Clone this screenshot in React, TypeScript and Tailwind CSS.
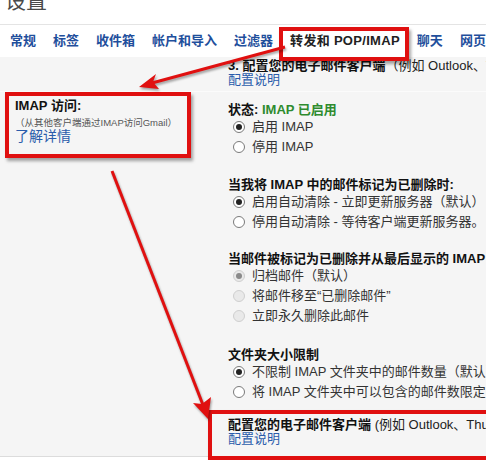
import React from "react";

type Opt = { label: string; checked?: boolean };

const tabs = ["常规", "标签", "收件箱", "帐户和导入", "过滤器"];

function Radio({ checked, disabled }: { checked?: boolean; disabled?: boolean }) {
  return (
    <span
      className={
        disabled
          ? "flex h-[12px] w-[12px] shrink-0 items-center justify-center rounded-full border border-[#cfcfcf] bg-[#e9e9e9]"
          : "flex h-[12px] w-[12px] shrink-0 items-center justify-center rounded-full border border-[#7a7a7a] bg-white"
      }
    >
      {checked ? (
        <span
          className={
            disabled
              ? "h-[6px] w-[6px] rounded-full bg-[#8a8a8a]"
              : "h-[6px] w-[6px] rounded-full bg-[#222]"
          }
        />
      ) : null}
    </span>
  );
}

function Group({
  title,
  options,
  disabled,
  className,
}: {
  title: React.ReactNode;
  options: Opt[];
  disabled?: boolean;
  className?: string;
}) {
  return (
    <div className={className}>
      <div className="h-[15px] font-bold leading-[15px] text-[#111]">{title}</div>
      {options.map((o) => (
        <div key={o.label} className="flex h-[20px] items-center gap-[7px] pl-[5px]">
          <Radio checked={o.checked} disabled={disabled} />
          <span className="leading-[20px] text-[#333]">{o.label}</span>
        </div>
      ))}
    </div>
  );
}

export default function App() {
  return (
    <div className="relative h-[460px] w-[486px] overflow-hidden whitespace-nowrap bg-white text-[13px] text-[#222] [font-family:'Liberation_Sans','Noto_Sans_CJK_SC',sans-serif]">
      {/* page title, cut off at the top */}
      <div className="h-[25px] overflow-hidden border-b border-[#e4e4e4] pl-[5px]">
        <div className="-mt-[14px] text-[21px] leading-[30px] text-[#4a4a4a]">设置</div>
      </div>

      {/* tabs */}
      <nav className="flex h-[32px] items-center gap-[17px] pl-[10px] font-bold text-[#1f4f9c]">
        {tabs.map((t) => (
          <span key={t}>{t}</span>
        ))}
        <span className="tracking-[0.3px] text-[#222]">转发和 POP/IMAP</span>
        <span>聊天</span>
        <span>网页剪辑</span>
      </nav>

      {/* settings panel */}
      <div className="h-[400px] border-b border-[#dcdcdc] bg-[#f5f5f5]">
        <div className="h-[35px] border-b border-[#fbfbfb] pl-[228px] pt-[2px] leading-[14px]">
          <div>
            <span className="font-bold text-[#111]">3. 配置您的电子邮件客户端</span>
            <span>（例如 Outlook、Thunderbird、iPhone）</span>
          </div>
          <div className="text-[#2a5cab]">配置说明</div>
        </div>

        <div className="grid grid-cols-[228px_1fr]">
          <div className="pl-[15px] pt-[6px]">
            <div className="font-bold leading-[16px] text-[#111]">IMAP 访问:</div>
            <div className="mt-[3px] text-[9.5px] leading-[11px] text-[#555]">（从其他客户端通过IMAP访问Gmail）</div>
            <div className="text-[14px] leading-[17px] text-[#2a5cab]">了解详情</div>
          </div>

          <div className="overflow-hidden pt-[10px]">
            <Group
              title={
                <>
                  状态: <span className="text-[#2e8b2e]">IMAP 已启用</span>
                </>
              }
              options={[{ label: "启用 IMAP", checked: true }, { label: "停用 IMAP" }]}
            />
            <Group
              className="mt-[20px]"
              title="当我将 IMAP 中的邮件标记为已删除时:"
              options={[
                { label: "启用自动清除 - 立即更新服务器（默认）", checked: true },
                { label: "停用自动清除 - 等待客户端更新服务器。" },
              ]}
            />
            <Group
              className="mt-[19px]"
              disabled
              title="当邮件被标记为已删除并从最后显示的 IMAP 文件夹中清除时:"
              options={[
                { label: "归档邮件（默认）", checked: true },
                { label: "将邮件移至“已删除邮件”" },
                { label: "立即永久删除此邮件" },
              ]}
            />
            <Group
              className="mt-[21px]"
              title="文件夹大小限制"
              options={[
                { label: "不限制 IMAP 文件夹中的邮件数量（默认）", checked: true },
                { label: "将 IMAP 文件夹中可以包含的邮件数限定为 1,000" },
              ]}
            />
          </div>
        </div>

        <div className="mt-[16px] pl-[228px] leading-[14px]">
          <div>
            <span className="font-bold text-[#111]">配置您的电子邮件客户端</span>
            <span> (例如 Outlook、Thunderbird、iPhone)</span>
          </div>
          <div className="text-[#2a5cab]">配置说明</div>
        </div>
      </div>

      {/* red annotation boxes */}
      <div className="absolute left-[279px] top-[27px] h-[34px] w-[130px] border-[4px] border-[#e01010] shadow-[2px_3px_3px_rgba(0,0,0,0.35)]" />
      <div className="absolute left-[5px] top-[92px] h-[66px] w-[186px] border-[4px] border-[#e01010] shadow-[2px_3px_3px_rgba(0,0,0,0.35)]" />
      <div className="absolute left-[208px] top-[410px] h-[50px] w-[290px] border-[4px] border-[#e01010] shadow-[2px_3px_3px_rgba(0,0,0,0.35)]" />

      {/* red arrows */}
      <svg
        className="pointer-events-none absolute left-0 top-0 drop-shadow-[1px_2px_1px_rgba(0,0,0,0.35)]"
        width="486"
        height="460"
        viewBox="0 0 486 460"
      >
        <line x1="285" y1="47" x2="152" y2="83" stroke="#e01010" strokeWidth="3" />
        <polygon points="139,87 159,89 153,82 156,74" fill="#e01010" />
        <line x1="112" y1="171" x2="203" y2="405" stroke="#e01010" strokeWidth="3" />
        <polygon points="208,419 193,403 202,404 211,397" fill="#e01010" />
      </svg>
    </div>
  );
}
